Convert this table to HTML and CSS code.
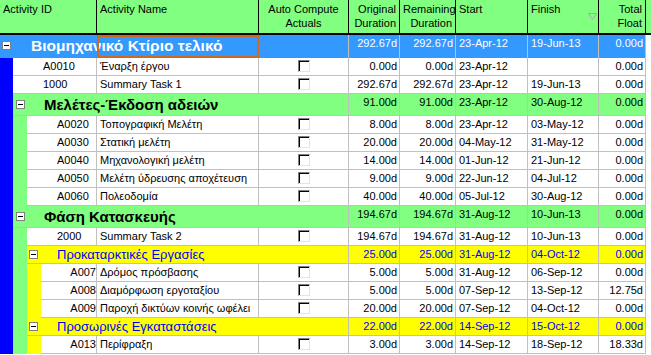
FILE: index.html
```html
<!DOCTYPE html>
<html>
<head>
<meta charset="utf-8">
<link rel="stylesheet" href="styles.css">
</head>
<body>
<div class="sheet">
  <div class="hdr">
    <div class="h">Activity ID</div>
    <div class="h">Activity Name</div>
    <div class="h ctr">Auto Compute<br>Actuals</div>
    <div class="h rt">Original<br>Duration</div>
    <div class="h rt">Remaining<br>Duration</div>
    <div class="h">Start</div>
    <div class="h sort"><span>Finish</span><svg class="tri" width="9" height="7" viewBox="0 0 9 7"><path d="M0.5 0.5H8.5L4.5 6.5Z" fill="none" stroke="#a8a8a8"/></svg></div>
    <div class="h rt">Total<br>Float</div>
    <div class="h end"></div>
  </div>

  <div class="row g0">
    <div class="gt0"><span class="tog"></span><span class="t0">Βιομηχανικό Κτίριο τελικό</span></div>
    <div class="focus"></div>
    <div class="c"></div>
    <div class="c n">292.67d</div>
    <div class="c n">292.67d</div>
    <div class="c d">23-Apr-12</div>
    <div class="c d">19-Jun-13</div>
    <div class="c n">0.00d</div>
    <div class="fill"></div>
  </div>

  <div class="row">
    <div class="idc"><i class="sb"></i><div class="id">A0010</div></div>
    <div class="c nm">Έναρξη έργου</div>
    <div class="c ck"><span class="box"></span></div>
    <div class="c n">0.00d</div>
    <div class="c n">0.00d</div>
    <div class="c d">23-Apr-12</div>
    <div class="c d"></div>
    <div class="c n">0.00d</div>
    <div class="fill"></div>
  </div>

  <div class="row">
    <div class="idc"><i class="sb"></i><div class="id">1000</div></div>
    <div class="c nm">Summary Task 1</div>
    <div class="c ck"><span class="box"></span></div>
    <div class="c n">292.67d</div>
    <div class="c n">292.67d</div>
    <div class="c d">23-Apr-12</div>
    <div class="c d">19-Jun-13</div>
    <div class="c n">0.00d</div>
    <div class="fill"></div>
  </div>

  <div class="row g1">
    <div class="gt1"><i class="sb"></i><div class="gbody"><span class="tog"></span><span class="t1">Μελέτες-Έκδοση αδειών</span></div></div>
    <div class="c n">91.00d</div>
    <div class="c n">91.00d</div>
    <div class="c d">23-Apr-12</div>
    <div class="c d">30-Aug-12</div>
    <div class="c n">0.00d</div>
    <div class="fill"></div>
  </div>

  <div class="row">
    <div class="idc"><i class="sb"></i><i class="sg"></i><div class="id">A0020</div></div>
    <div class="c nm">Τοπογραφική Μελέτη</div>
    <div class="c ck"><span class="box"></span></div>
    <div class="c n">8.00d</div>
    <div class="c n">8.00d</div>
    <div class="c d">23-Apr-12</div>
    <div class="c d">03-May-12</div>
    <div class="c n">0.00d</div>
    <div class="fill"></div>
  </div>

  <div class="row">
    <div class="idc"><i class="sb"></i><i class="sg"></i><div class="id">A0030</div></div>
    <div class="c nm">Στατική μελέτη</div>
    <div class="c ck"><span class="box"></span></div>
    <div class="c n">20.00d</div>
    <div class="c n">20.00d</div>
    <div class="c d">04-May-12</div>
    <div class="c d">31-May-12</div>
    <div class="c n">0.00d</div>
    <div class="fill"></div>
  </div>

  <div class="row">
    <div class="idc"><i class="sb"></i><i class="sg"></i><div class="id">A0040</div></div>
    <div class="c nm">Μηχανολογική μελέτη</div>
    <div class="c ck"><span class="box"></span></div>
    <div class="c n">14.00d</div>
    <div class="c n">14.00d</div>
    <div class="c d">01-Jun-12</div>
    <div class="c d">21-Jun-12</div>
    <div class="c n">0.00d</div>
    <div class="fill"></div>
  </div>

  <div class="row">
    <div class="idc"><i class="sb"></i><i class="sg"></i><div class="id">A0050</div></div>
    <div class="c nm">Μελέτη ύδρευσης αποχέτευση</div>
    <div class="c ck"><span class="box"></span></div>
    <div class="c n">9.00d</div>
    <div class="c n">9.00d</div>
    <div class="c d">22-Jun-12</div>
    <div class="c d">04-Jul-12</div>
    <div class="c n">0.00d</div>
    <div class="fill"></div>
  </div>

  <div class="row">
    <div class="idc"><i class="sb"></i><i class="sg"></i><div class="id">A0060</div></div>
    <div class="c nm">Πολεοδομία</div>
    <div class="c ck"><span class="box"></span></div>
    <div class="c n">40.00d</div>
    <div class="c n">40.00d</div>
    <div class="c d">05-Jul-12</div>
    <div class="c d">30-Aug-12</div>
    <div class="c n">0.00d</div>
    <div class="fill"></div>
  </div>

  <div class="row g1">
    <div class="gt1"><i class="sb"></i><div class="gbody"><span class="tog"></span><span class="t1">Φάση Κατασκευής</span></div></div>
    <div class="c n">194.67d</div>
    <div class="c n">194.67d</div>
    <div class="c d">31-Aug-12</div>
    <div class="c d">10-Jun-13</div>
    <div class="c n">0.00d</div>
    <div class="fill"></div>
  </div>

  <div class="row">
    <div class="idc"><i class="sb"></i><i class="sg"></i><div class="id">2000</div></div>
    <div class="c nm">Summary Task 2</div>
    <div class="c ck"><span class="box"></span></div>
    <div class="c n">194.67d</div>
    <div class="c n">194.67d</div>
    <div class="c d">31-Aug-12</div>
    <div class="c d">10-Jun-13</div>
    <div class="c n">0.00d</div>
    <div class="fill"></div>
  </div>

  <div class="row g2">
    <div class="gt2"><i class="sb"></i><i class="sg"></i><div class="gbody"><span class="tog"></span><span class="t2">Προκαταρκτικές Εργασίες</span></div></div>
    <div class="c n">25.00d</div>
    <div class="c n">25.00d</div>
    <div class="c d">31-Aug-12</div>
    <div class="c d">04-Oct-12</div>
    <div class="c n">0.00d</div>
    <div class="fill"></div>
  </div>

  <div class="row">
    <div class="idc"><i class="sb"></i><i class="sg"></i><i class="sy"></i><div class="id idr">A007</div></div>
    <div class="c nm">Δρόμος πρόσβασης</div>
    <div class="c ck"><span class="box"></span></div>
    <div class="c n">5.00d</div>
    <div class="c n">5.00d</div>
    <div class="c d">31-Aug-12</div>
    <div class="c d">06-Sep-12</div>
    <div class="c n">0.00d</div>
    <div class="fill"></div>
  </div>

  <div class="row">
    <div class="idc"><i class="sb"></i><i class="sg"></i><i class="sy"></i><div class="id idr">A008</div></div>
    <div class="c nm">Διαμόρφωση εργοταξίου</div>
    <div class="c ck"><span class="box"></span></div>
    <div class="c n">5.00d</div>
    <div class="c n">5.00d</div>
    <div class="c d">07-Sep-12</div>
    <div class="c d">13-Sep-12</div>
    <div class="c n">12.75d</div>
    <div class="fill"></div>
  </div>

  <div class="row">
    <div class="idc"><i class="sb"></i><i class="sg"></i><i class="sy"></i><div class="id idr">A009</div></div>
    <div class="c nm">Παροχή δικτύων κοινής ωφέλει</div>
    <div class="c ck"><span class="box"></span></div>
    <div class="c n">20.00d</div>
    <div class="c n">20.00d</div>
    <div class="c d">07-Sep-12</div>
    <div class="c d">04-Oct-12</div>
    <div class="c n">0.00d</div>
    <div class="fill"></div>
  </div>

  <div class="row g2">
    <div class="gt2"><i class="sb"></i><i class="sg"></i><div class="gbody"><span class="tog"></span><span class="t2">Προσωρινές Εγκαταστάσεις</span></div></div>
    <div class="c n">22.00d</div>
    <div class="c n">22.00d</div>
    <div class="c d">14-Sep-12</div>
    <div class="c d">15-Oct-12</div>
    <div class="c n">0.00d</div>
    <div class="fill"></div>
  </div>

  <div class="row">
    <div class="idc"><i class="sb"></i><i class="sg"></i><i class="sy"></i><div class="id idr">A013</div></div>
    <div class="c nm">Περίφραξη</div>
    <div class="c ck"><span class="box"></span></div>
    <div class="c n">3.00d</div>
    <div class="c n">3.00d</div>
    <div class="c d">14-Sep-12</div>
    <div class="c d">18-Sep-12</div>
    <div class="c n">18.33d</div>
    <div class="fill"></div>
  </div>
</div>
</body>
</html>
```

FILE: styles.css
```css
* { box-sizing: border-box; }
html, body { margin: 0; padding: 0; }
body {
  font-family: "Liberation Sans", Arial, sans-serif;
  font-size: 11px;
  color: #000;
  background: #fff;
  width: 651px;
  height: 355px;
  overflow: hidden;
}
.hdr, .row {
  display: grid;
  grid-template-columns: 97px 162px 90px 51px 56px 72px 71px 47px 5px;
}
.hdr {
  height: 35px;
  background: #80ff80;
  border-bottom: 2px solid #000;
}
.h {
  border-right: 1px solid #000;
  padding: 2px 3px 0;
  line-height: 14px;
  white-space: nowrap;
  overflow: hidden;
}
.h.end { border-right: 0; }
.ctr { text-align: center; }
.rt { text-align: right; }
.sort {
  display: flex;
  justify-content: space-between;
  align-items: flex-start;
}
.tri { margin-top: 11px; margin-right: -2px; flex: none; }

.row { height: 18px; }
.c {
  border-right: 1px solid #c0c0c0;
  border-bottom: 1px solid #c0c0c0;
  line-height: 17px;
  white-space: nowrap;
  overflow: hidden;
  padding: 0 3px;
}
.n { text-align: right; padding-right: 2px; }
.nm { padding-left: 3px; }
.fill { background: #fff; }

.sb, .sg, .sy { display: block; flex: none; height: 100%; }
.sb { width: 13px; background: #0000ff; }
.sg { width: 14px; background: #80ff80; }
.sy { width: 14px; background: #ffff00; }

.idc { display: flex; height: 100%; }
.id {
  flex: 1;
  min-width: 0;
  border-right: 1px solid #c0c0c0;
  border-bottom: 1px solid #c0c0c0;
  line-height: 17px;
  padding-left: 30px;
  white-space: nowrap;
  overflow: hidden;
}
.id.idr { padding-left: 0; text-align: right; }

.ck { display: flex; justify-content: center; align-items: center; }
.ck .box {
  display: block;
  width: 12px;
  height: 12px;
  margin-bottom: 1px;
  background: #fff;
  border-top: 1px solid #808080;
  border-left: 1px solid #808080;
  border-right: 1px solid #e4e4e4;
  border-bottom: 1px solid #e4e4e4;
  box-shadow: inset 1px 1px 0 #000;
}

.tog {
  display: block;
  flex: none;
  width: 9px;
  height: 9px;
  border: 1px solid #808080;
  background: linear-gradient(#000, #000) center / 5px 1px no-repeat #fff;
}

/* top level group */
.g0 { height: 23px; background: #3399ff; color: #fff; }
.g0 .c { border-bottom: 0; }
.gt0 {
  display: flex;
  align-items: center;
  white-space: nowrap;
  padding-left: 2px;
  padding-bottom: 2px;
}
.t0 {
  margin-left: 20px;
  font-size: 15.5px;
  font-weight: bold;
  color: #fff;
}
.focus { border: 2px solid #cc6a1f; }

/* level 1 group */
.g1 { height: 22px; }
.g1 .c { background: #80ff80; }
.gt1 {
  grid-column: span 3;
  display: flex;
  height: 100%;
  border-right: 1px solid #c0c0c0;
}
.gbody {
  flex: 1;
  display: flex;
  align-items: center;
  border-bottom: 1px solid #c0c0c0;
  white-space: nowrap;
  overflow: hidden;
}
.g1 .gbody { background: #80ff80; padding-left: 3px; }
.t1 {
  margin-left: 19px;
  font-size: 15px;
  font-weight: bold;
}

/* level 2 group */
.g2 .c { background: #ffff00; color: #0000ff; }
.gt2 {
  grid-column: span 3;
  display: flex;
  height: 100%;
  border-right: 1px solid #c0c0c0;
}
.g2 .gbody { background: #ffff00; padding-left: 2px; }
.t2 {
  margin-left: 19px;
  font-size: 13px;
  color: #0000ff;
}
```
